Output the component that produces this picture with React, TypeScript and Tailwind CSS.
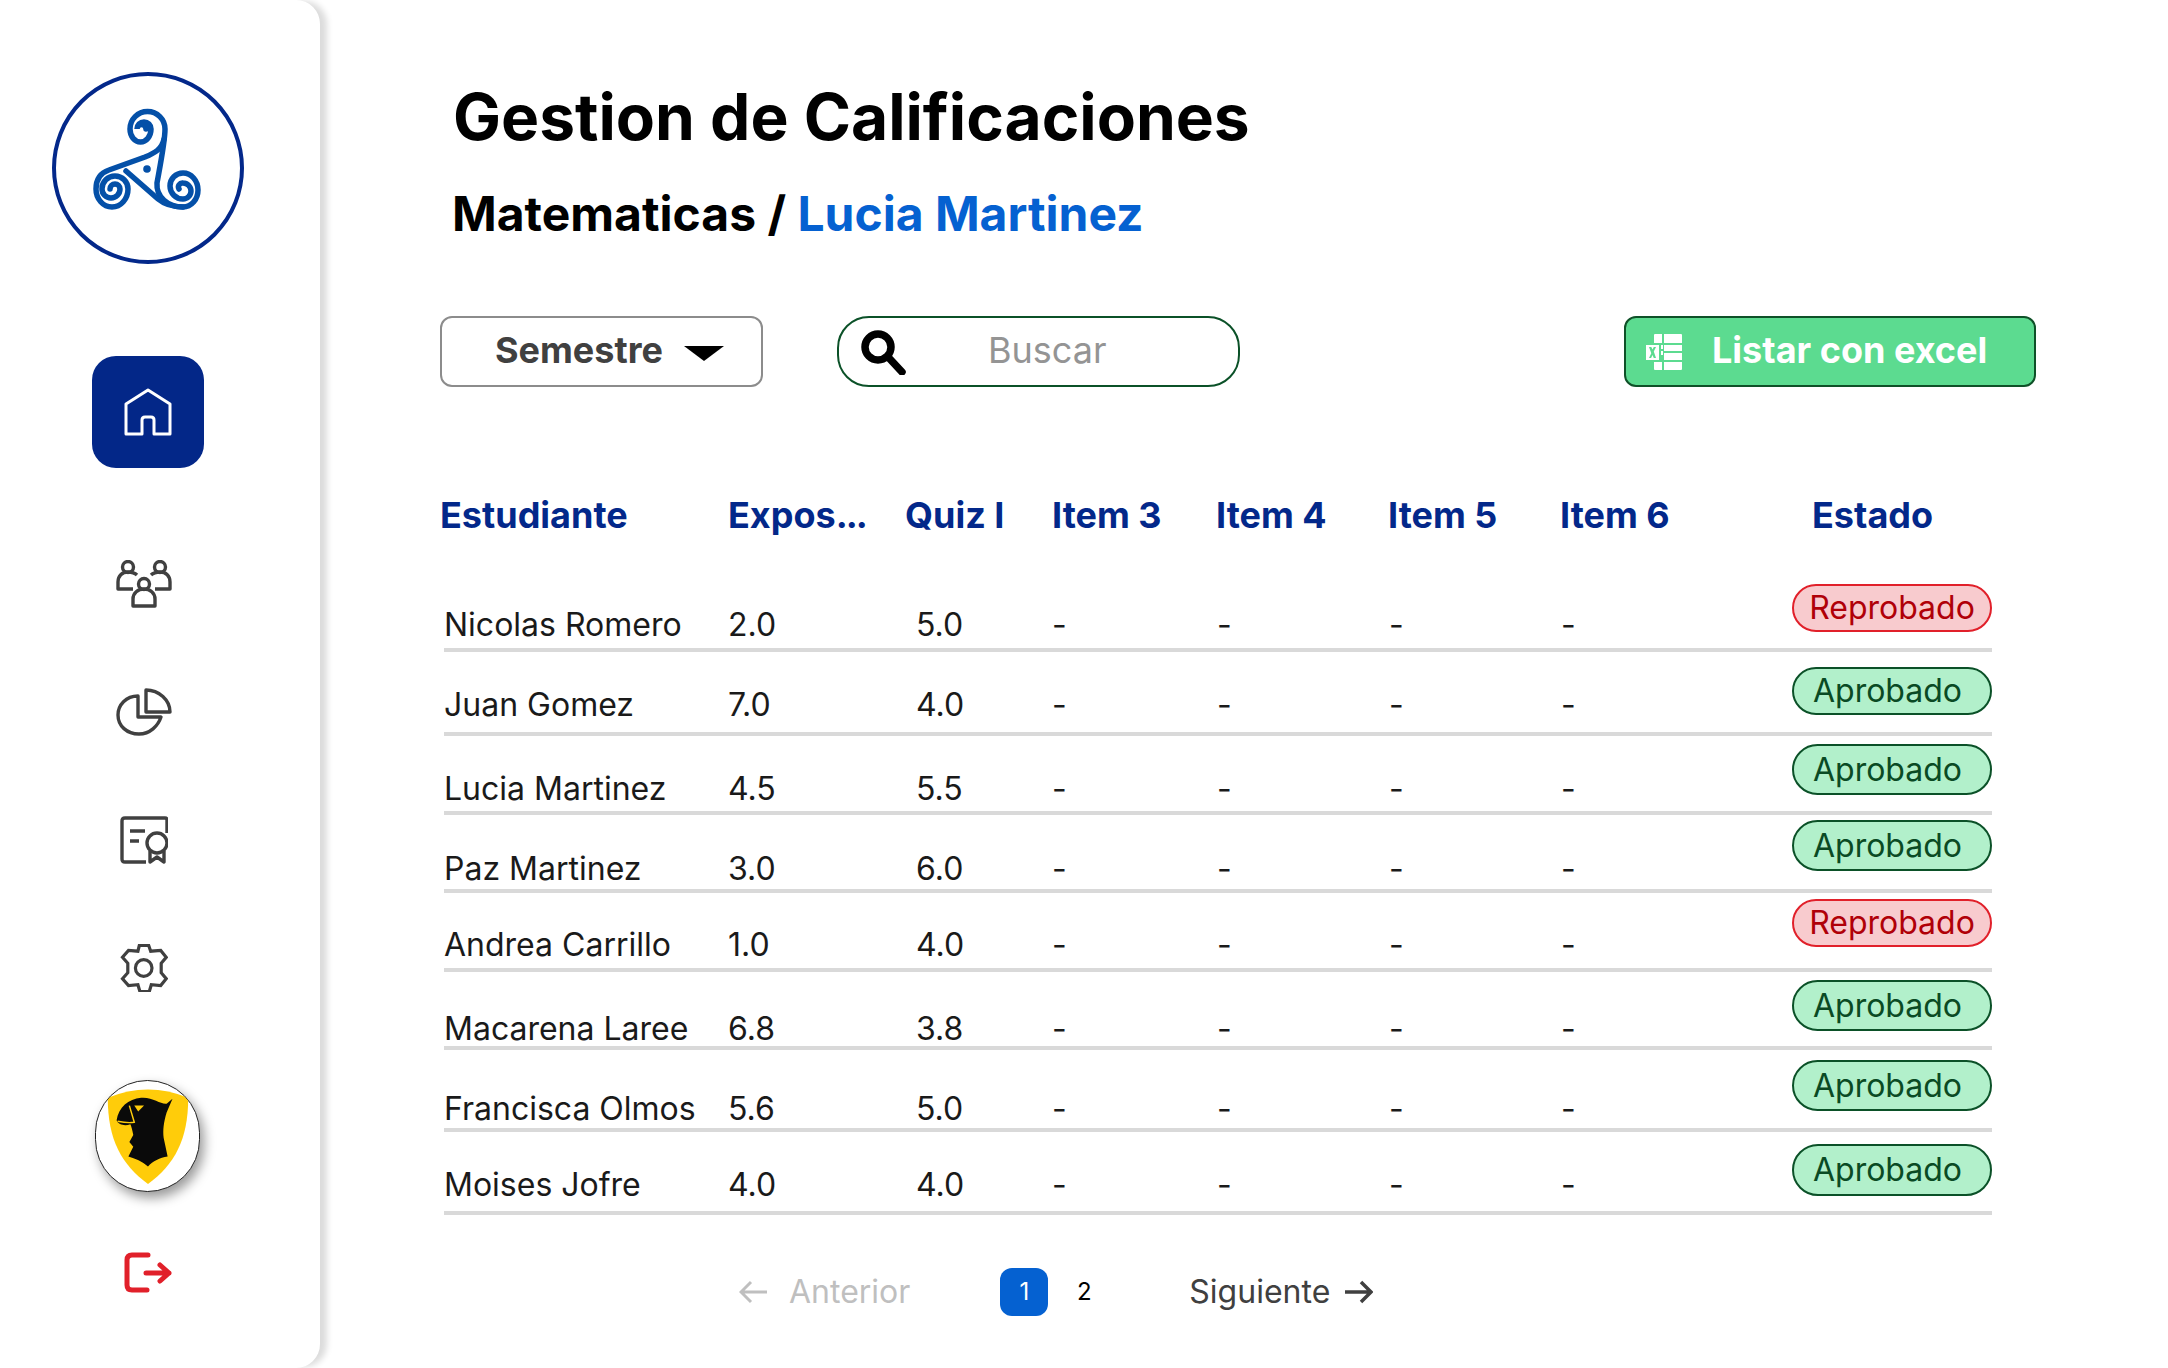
import React from 'react';

interface IStudentRow {
  name: string;
  score1: string;
  score2: string;
  passed: boolean;
  rowClass: string;
  textClass: string;
  badgeClass: string;
  pillClass: string;
}

const rows: IStudentRow[] = [
  { name: 'Nicolas Romero', score1: '2.0', score2: '5.0', passed: false, rowClass: 'h-[113px]', textClass: 'pb-[7px]', badgeClass: 'pb-[16px]', pillClass: 'h-[48px]' },
  { name: 'Juan Gomez', score1: '7.0', score2: '4.0', passed: true, rowClass: 'h-[84px]', textClass: 'pb-[11px]', badgeClass: 'pb-[17px]', pillClass: 'h-[48px]' },
  { name: 'Lucia Martinez', score1: '4.5', score2: '5.5', passed: true, rowClass: 'h-[79px]', textClass: 'pb-[6px]', badgeClass: 'pb-[16px]', pillClass: 'h-[51px]' },
  { name: 'Paz Martinez', score1: '3.0', score2: '6.0', passed: true, rowClass: 'h-[78px]', textClass: 'pb-[4px]', badgeClass: 'pb-[18px]', pillClass: 'h-[51px]' },
  { name: 'Andrea Carrillo', score1: '1.0', score2: '4.0', passed: false, rowClass: 'h-[79px]', textClass: 'pb-[7px]', badgeClass: 'pb-[21px]', pillClass: 'h-[48px]' },
  { name: 'Macarena Laree', score1: '6.8', score2: '3.8', passed: true, rowClass: 'h-[78px]', textClass: 'pb-[1px]', badgeClass: 'pb-[15px]', pillClass: 'h-[51px]' },
  { name: 'Francisca Olmos', score1: '5.6', score2: '5.0', passed: true, rowClass: 'h-[82px]', textClass: 'pb-[3px]', badgeClass: 'pb-[17px]', pillClass: 'h-[51px]' },
  { name: 'Moises Jofre', score1: '4.0', score2: '4.0', passed: true, rowClass: 'h-[83px]', textClass: 'pb-[10px]', badgeClass: 'pb-[15px]', pillClass: 'h-[52px]' }
];

const TriskelLogo = () => (
  <svg viewBox="0 0 108 99" className="h-[99px] w-[108px] overflow-visible" fill="none" stroke="#0450a8" strokeWidth="5.500" strokeLinecap="round">
    <path d="M53 18A4.500 4.500 0 0 0 44 18 7 7 0 0 1 58 18 10.500 13 0 0 1 37 18 17.500 17.500 0 0 1 72 18C72 30 68 50 64 72 63 86 75 96 90 96A15 17 0 0 0 90 62 13 13 0 0 0 90 88 8 8 0 0 0 90 72 4 4 0 0 0 86 78" />
    <path d="M71 28C69 38 62 42 52 46L16 59C7 62 3 68 3 78A16 18 0 0 0 35 78 13 13 0 0 0 9 78 9 9 0 0 0 27 78 5 5 0 0 0 17 78" />
    <path d="M33 60L65 88C71 93 78 96 90 96" />
    <circle cx="54" cy="58" r="3.800" fill="#0450a8" stroke="none" />
  </svg>
);

const GroupIcon = () => (
  <svg viewBox="0 0 56 48" className="h-[48px] w-[56px]" fill="none" stroke="#404040" strokeWidth="3.400" strokeLinejoin="round">
    <circle cx="12" cy="7" r="5.500" />
    <circle cx="44" cy="7" r="5.500" />
    <circle cx="28" cy="24" r="5.500" />
    <path d="M21 15c-2-2-5-3-9-3-6 0-10 4-10 10v7h15" />
    <path d="M35 15c2-2 5-3 9-3 6 0 10 4 10 10v7H39" />
    <path d="M17 46V39c0-6 5-10 11-10s11 4 11 10v7z" />
  </svg>
);

const PieIcon = () => (
  <svg viewBox="0 0 56 48" className="h-[48px] w-[56px]" fill="none" stroke="#404040" strokeWidth="3.400" strokeLinejoin="round">
    <path d="M22 8C10 8 2 17 2 27c0 11 9 19 21 19 11 0 19-8 22-17H22z" />
    <path d="M30 2v22h24C54 12 43 2 30 2z" />
  </svg>
);

const CertificateIcon = () => (
  <svg viewBox="0 0 48 48" className="h-[48px] w-[48px]" fill="none" stroke="#404040" strokeWidth="3.400" strokeLinejoin="round">
    <path d="M26 46H5q-3 0-3-3V5q0-3 3-3h40q2 0 2 2v13" />
    <path d="M10 15h15M10 25h9" />
    <circle cx="37" cy="27" r="10" />
    <path d="M30 35v11l7-5 7 5V35" />
  </svg>
);

const GearIcon = () => (
  <svg viewBox="0 0 48 48" className="h-[48px] w-[48px]" fill="none" stroke="#404040" strokeWidth="3.200" strokeLinejoin="miter">
    <path d="M19.300 1.500h9.400l2 5.700 10-.7 5.500 6.800-5 6v9.400l5 6-5.500 6.800-9.400-.8-2 6.800h-9.400l-2-6.800-9.400.8-6-6.800 5.300-6v-9.400l-5.300-6 6-6.800 9.400.7z" />
    <circle cx="23.700" cy="24" r="8.300" />
  </svg>
);

const LogoutIcon = () => (
  <svg viewBox="0 0 48 41" className="h-[41px] w-[48px]" fill="none" stroke="#e1202a" strokeWidth="5" strokeLinecap="round" strokeLinejoin="round">
    <path d="M24 3H8q-5 0-5 5v25q0 5 5 5h15" />
    <path d="M22 21h23M36 13l9 8-9 8" />
  </svg>
);

const ExcelIcon = () => (
  <svg viewBox="0 0 36 36" className="h-[36px] w-[36px]" fill="white">
    <path d="M8 1q0-1 1-1h7v9H8zM18 0h17q1 0 1 1v8H18zM18 11h18v6H18zM18 19h18v7H18zM18 28h18v7q0 1-1 1H18zM8 28h8v8H9q-1 0-1-1z" />
    <path d="M0 11h13v15H0z" />
    <path d="M15 11h2v4h-2zM15 17h2v4h-2z" />
    <path d="M3 13h2.300l1.200 2.600L7.800 13H10l-2.200 4.400L10 24H7.800l-1.300-3-1.400 3H3l2.300-4.800z" fill="#5cdb90" />
  </svg>
);

const ShieldAvatar = () => (
  <svg viewBox="0 0 105 112" className="h-full w-full">
    <path d="M12 17Q53 0 94 17C94 60 80 85 53 105 26 85 12 60 12 17z" fill="#ffcc0a" />
    <path d="M21 40C23 27 33 18 46 17 58 16 66 24 72 23l6-5-6 14C69 42 68 50 69 58l4 19C65 78 58 82 53 87 47 82 40 79 33 77l5-10-4-5 4-7C37 50 36 46 35 44 30 46 23 45 21 40z" fill="#0a0a0a" />
    <path d="M39 25h10l-6 6z" fill="#ffcc0a" />
    <path d="M34 25l5 17c-6 1-12 0-17-1" fill="none" stroke="#ffcc0a" strokeWidth="1.500" />
  </svg>
);

const SemesterFilter = () => (
  <button className="flex h-[71px] w-[323px] items-center rounded-[12px] border-2 border-[#8c8c8c] pl-[53px]">
    <span className="pb-[3px] text-[36px] font-bold text-[#404040]">Semestre</span>
    <span className="ml-[21px] mt-[4px] h-0 w-0 border-x-[20px] border-t-[15px] border-x-transparent border-t-black" />
  </button>
);

const SearchBox = () => (
  <div className="ml-[74px] flex h-[71px] w-[403px] items-center rounded-[32px] border-2 border-[#0b5128] pl-[21px]">
    <svg viewBox="0 0 46 46" className="h-[46px] w-[46px]" fill="none" stroke="black" strokeLinecap="round">
      <circle cx="18" cy="18" r="13" strokeWidth="7.500" />
      <path d="M29 29l13 14" strokeWidth="7.500" />
    </svg>
    <span className="ml-[82px] pb-[3px] text-[36px] text-[#949494]">Buscar</span>
  </div>
);

const StudentRow: React.FC<{ row: IStudentRow }> = ({ row }) => (
  <div className={`ml-[4px] grid w-[1548px] grid-cols-[284px_177px_147px_165px_172px_172px_231px_200px] items-end border-b-[4px] border-[#d9d9d9] text-[32px] leading-[32px] text-[#1a1a1a] ${row.rowClass}`}>
    <span className={row.textClass}>{row.name}</span>
    <span className={row.textClass}>{row.score1}</span>
    <span className={`${row.textClass} pl-[11px]`}>{row.score2}</span>
    <span className={row.textClass}>-</span>
    <span className={row.textClass}>-</span>
    <span className={row.textClass}>-</span>
    <span className={row.textClass}>-</span>
    <div className={row.badgeClass}>
      {row.passed ? (
        <div className={`flex items-center justify-center rounded-full border-2 border-[#0b5128] bg-[#b2f0cb] pr-[9px] text-[#0a4a24] ${row.pillClass}`}>Aprobado</div>
      ) : (
        <div className={`flex items-center justify-center rounded-full border-2 border-[#e1202a] bg-[#f8cbce] text-[#b00008] ${row.pillClass}`}>Reprobado</div>
      )}
    </div>
  </div>
);

export default function App() {
  return (
    <div className="flex h-[1368px] w-[2168px] overflow-hidden bg-white font-['Inter',sans-serif]">
      <aside className="flex h-full w-[320px] shrink-0 flex-col items-center rounded-r-[24px] bg-white pr-[24px] shadow-[8px_0_6px_-1px_#dcdcdc]">
        <div className="mt-[72px] flex h-[192px] w-[192px] items-center justify-center rounded-full border-[4px] border-[#03288a] pr-[2px] pb-[15px]">
          <TriskelLogo />
        </div>
        <div className="mt-[92px] flex h-[112px] w-[112px] items-center justify-center rounded-[24px] bg-[#032788]">
          <svg viewBox="0 0 48 48" className="h-[48px] w-[48px]" fill="none" stroke="white" strokeWidth="3" strokeLinejoin="round">
            <path d="M24 2L46 16v30H30V32q0-3-3-3h-6q-3 0-3 3v14H2V16z" />
          </svg>
        </div>
        <div className="mt-[92px] -ml-[8px] flex flex-col items-center gap-[80px]">
          <GroupIcon />
          <PieIcon />
          <CertificateIcon />
          <GearIcon />
        </div>
        <div className="mt-[88px] -ml-[2px] h-[112px] w-[105px] overflow-hidden rounded-full border border-[#222] bg-white shadow-[4px_6px_12px_#9a9a9a]">
          <ShieldAvatar />
        </div>
        <div className="mt-[60px]">
          <LogoutIcon />
        </div>
      </aside>
      <main className="flex flex-1 flex-col pl-[120px]">
        <h1 className="mt-[75px] pl-[13px] text-[64px] leading-[84px] font-bold text-black">Gestion de Calificaciones</h1>
        <h2 className="mt-[19px] pl-[12px] text-[48px] leading-[72px] font-bold text-black">
          Matematicas / <span className="text-[#0561d1]">Lucia Martinez</span>
        </h2>
        <div className="mt-[66px] flex items-center">
          <SemesterFilter />
          <SearchBox />
          <button className="ml-[384px] flex h-[71px] w-[412px] items-center rounded-[12px] border-2 border-[#0f5128] bg-[#5cdb90] pl-[20px] text-[36px] font-bold text-white">
            <ExcelIcon />
            <span className="ml-[30px] pb-[3px]">Listar con excel</span>
          </button>
        </div>
        <div className="mt-[104px] grid grid-cols-[288px_177px_147px_164px_172px_172px_252px_200px] text-[36px] leading-[48px] font-bold text-[#03288a]">
          <span>Estudiante</span>
          <span>Expos<span className="tracking-[-2px]">...</span></span>
          <span>Quiz I</span>
          <span>Item 3</span>
          <span>Item 4</span>
          <span>Item 5</span>
          <span>Item 6</span>
          <span>Estado</span>
        </div>
        <div className="flex flex-col">
          {rows.map((row) => (
            <StudentRow key={row.name} row={row} />
          ))}
        </div>
        <div className="mt-[53px] flex items-center pl-[299px] text-[32px]">
          <div className="flex items-center text-[#bfbfbf]">
            <svg viewBox="0 0 28 24" className="h-[24px] w-[28px]" fill="none" stroke="#bfbfbf" strokeWidth="3">
              <path d="M28 12H2M12 2L2 12l10 10" />
            </svg>
            <span className="ml-[22px]">Anterior</span>
          </div>
          <div className="ml-[90px] flex h-[48px] w-[48px] items-center justify-center rounded-[12px] bg-[#0561d1] text-[24px] text-white">1</div>
          <div className="ml-[24px] w-[24px] text-center text-[24px] text-black">2</div>
          <div className="ml-[93px] flex items-center text-[#404040]">
            <span>Siguiente</span>
            <svg viewBox="0 0 28 24" className="ml-[15px] h-[24px] w-[28px]" fill="none" stroke="#404040" strokeWidth="3.500">
              <path d="M0 12h26M16 2l10 10-10 10" />
            </svg>
          </div>
        </div>
      </main>
    </div>
  );
}
